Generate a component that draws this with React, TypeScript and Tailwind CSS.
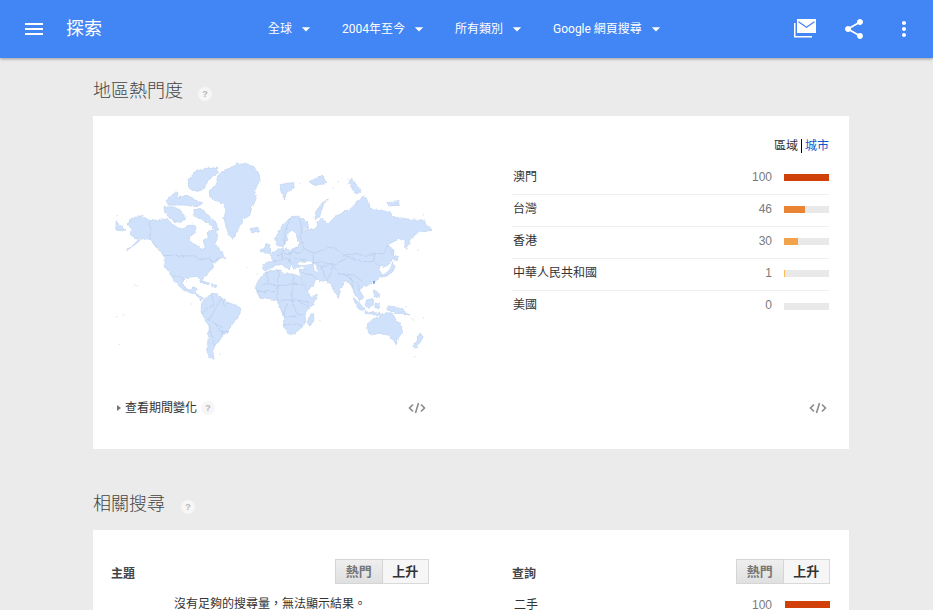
import { MdMenu, MdShare, MdMoreVert, MdArrowDropDown } from "react-icons/md";

const font = { fontFamily: '"Liberation Sans"' };

const filters = ["全球", "2004年至今", "所有類別", "Google 網頁搜尋"];

const regions = [
  { name: "澳門", value: 100, color: "bg-[#d0410a]" },
  { name: "台灣", value: 46, color: "bg-[#e88434]" },
  { name: "香港", value: 30, color: "bg-[#f2a24b]" },
  { name: "中華人民共和國", value: 1, color: "bg-[#fbbc52]" },
  { name: "美國", value: 0, color: "bg-[#fbbc52]" },
];

const land = [
  // north america
  "M84,222 L92,207 L115,197 L150,208 L175,212 L205,206 L215,222 L232,232 L250,238 L262,228 L280,222 L288,232 L285,245 L270,258 L268,272 L285,285 L300,292 L305,305 L315,290 L310,270 L325,265 L322,245 L340,240 L350,250 L354,262 L345,280 L355,295 L365,310 L378,323 L360,325 L350,335 L335,340 L338,352 L325,368 L310,385 L305,395 L300,385 L285,380 L265,382 L250,385 L250,400 L260,418 L275,420 L285,412 L292,418 L285,430 L300,438 L310,445 L305,452 L295,440 L275,430 L250,420 L235,405 L222,390 L212,375 L205,365 L192,345 L192,320 L180,300 L165,285 L150,268 L130,265 L110,280 L90,295 L80,300 L100,285 L120,265 L100,262 L88,250 L95,240 Z",
  // south america
  "M305,460 L320,440 L335,430 L355,432 L365,445 L385,458 L405,465 L422,475 L420,490 L408,510 L395,525 L385,545 L368,555 L360,570 L345,585 L338,605 L342,628 L328,622 L320,600 L325,565 L328,530 L315,510 L303,485 Z",
  // greenland
  "M328,125 L345,105 L355,75 L385,55 L415,42 L445,42 L465,55 L482,80 L475,100 L465,120 L468,140 L455,170 L450,195 L430,210 L418,228 L408,255 L398,268 L388,258 L380,235 L372,205 L378,180 L368,160 L345,150 L330,140 Z",
  // eurasia
  "M488,358 L490,340 L505,335 L520,336 L515,325 L510,312 L525,305 L535,298 L548,296 L552,302 L560,296 L575,305 L578,295 L590,292 L600,280 L595,265 L590,250 L575,240 L565,250 L560,270 L553,285 L545,290 L530,285 L525,268 L535,245 L550,222 L570,205 L590,198 L610,205 L625,220 L625,235 L600,240 L605,245 L640,235 L650,232 L655,215 L665,205 L685,222 L700,205 L720,190 L745,180 L760,170 L775,150 L790,138 L805,150 L810,175 L840,180 L870,186 L880,200 L910,205 L940,210 L972,210 L992,240 L975,245 L960,246 L940,258 L930,275 L920,298 L915,285 L915,270 L905,265 L880,275 L865,285 L880,305 L880,320 L870,340 L855,350 L840,345 L838,360 L845,372 L835,385 L825,395 L805,405 L790,410 L778,420 L790,440 L782,452 L770,438 L760,418 L748,398 L735,395 L722,420 L715,445 L705,430 L695,405 L680,395 L660,392 L648,385 L640,405 L620,425 L610,405 L600,370 L598,358 L620,358 L605,350 L590,352 L582,358 L575,345 L565,340 L570,358 L558,352 L548,342 L535,345 L522,345 L512,355 L500,362 Z",
  // africa
  "M468,405 L480,385 L495,368 L515,362 L540,360 L555,372 L580,372 L600,380 L612,405 L625,430 L635,440 L652,436 L640,460 L625,480 L615,495 L617,515 L600,535 L585,552 L565,553 L552,525 L550,500 L540,470 L535,452 L520,448 L500,445 L480,445 L470,425 Z",
  // australia, tasmania, new zealand, madagascar
  "M802,522 L815,510 L835,502 L848,490 L865,488 L880,495 L888,510 L905,530 L905,548 L895,565 L880,570 L862,555 L845,548 L815,555 L805,548 Z",
  "M882,572 L894,572 L888,584 Z",
  "M958,552 L970,560 L960,575 L945,595 L938,590 L950,575 Z",
  "M640,490 L642,510 L630,528 L622,518 L628,500 Z",
  // japan, sakhalin
  "M840,378 L860,370 L872,355 L878,335 L885,350 L878,365 L860,378 L845,382 Z",
  "M880,322 L895,318 L892,332 L882,330 Z",
  "M874,296 L882,300 L880,318 L874,312 Z",
  // uk, ireland, iceland
  "M490,305 L495,290 L500,278 L510,285 L512,305 L495,310 Z",
  "M482,295 L490,292 L490,305 L482,305 Z",
  "M450,236 L474,232 L476,246 L456,250 Z",
  // indonesia, philippines
  "M760,445 L775,455 L795,480 L788,482 L770,470 Z",
  "M795,485 L840,490 L840,495 L795,490 Z",
  "M800,450 L820,445 L820,460 L808,475 L795,468 Z",
  "M825,460 L838,458 L835,480 L825,472 Z",
  "M862,468 L885,470 L905,478 L928,495 L905,490 L885,490 L865,480 Z",
  "M820,420 L832,425 L838,445 L825,440 Z",
  // caribbean
  "M300,392 L330,400 L325,404 L300,397 Z",
  "M335,405 L350,405 L348,412 L335,411 Z",
  // arctic islands
  "M262,95 L285,65 L315,55 L350,55 L355,68 L335,80 L320,100 L310,120 L285,125 L268,115 Z",
  "M282,180 L300,175 L325,195 L345,215 L355,240 L345,242 L335,225 L315,215 L300,205 L285,200 Z",
  "M192,172 L220,170 L240,180 L255,200 L245,218 L225,215 L205,200 L195,190 Z",
  "M198,150 L215,135 L232,125 L235,145 L260,135 L285,150 L310,160 L290,170 L255,165 L225,165 L205,165 Z",
  "M538,105 L560,100 L582,98 L578,115 L560,130 L553,148 L545,130 Z",
  "M628,95 L650,85 L668,78 L680,100 L650,105 Z",
  "M745,100 L755,85 L770,105 L785,122 L770,132 Z",
  "M645,205 L648,185 L665,160 L690,145 L680,155 L665,175 L658,205 Z",
  "M860,158 L895,155 L898,165 L870,168 Z",
  "M48,215 L60,225 L78,240 L65,242 L48,240 Z",
];

const specks = [
  [105, 405], [112, 408], [50, 500], [70, 495], [58, 583], [440, 352], [472, 372], [478, 392], [635, 505], [660, 512],
  [935, 505], [970, 503], [945, 620], [905, 477], [918, 470], [52, 197], [715, 95], [745, 88], [970, 195], [955, 300],
  [360, 612], [275, 462], [940, 510], [600, 100], [700, 115],
];

const borders = [
  "M150,208 L150,268 L175,300",
  "M190,316 L285,318 L300,330 L325,325 L340,335 L360,322",
  "M212,378 L240,378 L258,395",
  "M335,432 L340,465 L305,490",
  "M365,445 L345,480 L325,510 L345,520 L360,545 L385,545",
  "M328,530 L345,590",
  "M345,520 L370,535 L365,555",
  "M365,445 L375,470 L385,458",
  "M600,260 L612,295 L640,310 L680,295 L700,290 L730,315 L775,310 L795,320 L825,310 L850,312 L865,285",
  "M640,310 L640,340 L665,335 L700,345 L730,330 L745,318",
  "M730,315 L745,322 L785,335 L820,335 L825,310",
  "M825,340 L838,345",
  "M650,345 L665,350 L680,395",
  "M665,350 L700,345 L690,375 L680,395",
  "M700,345 L715,370 L750,380 L760,400",
  "M715,370 L760,375 L790,395",
  "M605,370 L640,375 L650,385",
  "M750,380 L760,418",
  "M770,395 L780,420",
  "M570,205 L555,245 L553,285",
  "M600,205 L605,245 L600,260",
  "M600,280 L585,300 L575,305 L570,330 L575,345",
  "M530,315 L545,312 L575,310",
  "M520,336 L540,330 L560,325 L585,340",
  "M548,296 L545,330",
  "M575,305 L600,310 L612,295",
  "M585,325 L620,330",
  "M500,366 L505,400 L535,410 L580,400 L580,372",
  "M535,360 L535,410",
  "M480,410 L505,400",
  "M470,425 L520,425 L535,410",
  "M535,410 L530,450",
  "M580,400 L610,405",
  "M530,450 L590,450 L625,455",
  "M580,400 L575,450 L590,490 L610,495",
  "M560,460 L550,500 L590,500",
  "M552,525 L590,520 L610,530",
  "M590,450 L625,470",
];

function HelpIcon({ className }: { className?: string }) {
  return (
    <span className={`flex h-[14px] w-[14px] items-center justify-center rounded-full bg-[#f6f6f6] text-[9px] font-bold leading-none text-[#b5b5b5] ${className ?? ""}`} style={font}>
      ?
    </span>
  );
}

function CodeIcon() {
  return (
    <svg width="18" height="12" viewBox="0 0 18 12" fill="none" stroke="#8a8a8a" strokeWidth="1.6">
      <path d="M5,2.5 L1.5,6 L5,9.5 M13,2.5 L16.5,6 L13,9.5 M10.5,1 L7.5,11" />
    </svg>
  );
}

function ToggleButtons() {
  return (
    <div className="flex h-[25px] w-[94px] text-[13px] font-bold">
      <div className="flex flex-1 items-center justify-center border border-[#d5d5d5] bg-gradient-to-b from-[#eeeeee] to-[#e0e0e0] text-[#777777]">熱門</div>
      <div className="flex flex-1 items-center justify-center border border-l-0 border-[#d9d9d9] bg-[#f6f6f6] text-[#333333]">上升</div>
    </div>
  );
}

function WorldMap() {
  return (
    <svg width="340" height="220" viewBox="0 0 1020 660">
      <defs>
        <filter id="coast" x="-5%" y="-5%" width="110%" height="110%" colorInterpolationFilters="sRGB">
          <feTurbulence type="fractalNoise" baseFrequency="0.07" numOctaves="3" seed="4" />
          <feDisplacementMap in="SourceGraphic" scale="10" xChannelSelector="R" yChannelSelector="G" />
        </filter>
      </defs>
      <g filter="url(#coast)">
        <g fill="#d0e1fb" stroke="#c4d6f0" strokeWidth="2.5" strokeLinejoin="round">
          {land.map((d) => (
            <path key={d} d={d} />
          ))}
        </g>
        {/* seas drawn over the land */}
        <path d="M592,338 L630,332 L640,342 L612,347 L596,346 Z M640,340 L650,345 L652,368 L642,362 Z" fill="#ffffff" stroke="#c4d6f0" strokeWidth="2" />
        <g fill="none" stroke="#bccfea" strokeWidth="2.5">
          {borders.map((d) => (
            <path key={d} d={d} />
          ))}
        </g>
      </g>
      {specks.map(([x, y]) => (
        <circle key={`${x}-${y}`} cx={x} cy={y} r="2" fill="#d0e1fb" />
      ))}
      <path d="M820,393 L825,393 L823,403 L820,402 Z" fill="#5b8fe0" />
    </svg>
  );
}

export default function App() {
  return (
    <div className="flex h-[610px] w-[933px] flex-col overflow-hidden bg-[#ebebeb] text-[#333333]" style={{ fontFamily: '"Liberation Sans", "Noto Sans CJK TC", sans-serif' }}>
      <header className="relative z-10 flex h-[58px] shrink-0 items-center bg-[#4285f4] text-white shadow-[0_1px_3px_rgba(0,0,0,0.35)]">
        <MdMenu className="ml-[22px] h-6 w-6" />
        <div className="ml-[20px] w-[36px] pt-[1px] text-[18px]">探索</div>
        <nav className="ml-[166px] flex items-center text-[12px]">
          {filters.map((f) => (
            <div key={f} className="mr-[26px] flex items-center">
              <span style={{ fontFamily: 'Roboto, "Noto Sans CJK TC", sans-serif' }}>{f}</span>
              <MdArrowDropDown className="ml-[4px] h-5 w-5" />
            </div>
          ))}
        </nav>
        <div className="ml-auto flex items-center">
          <svg width="24" height="22" viewBox="0 0 24 22" fill="white">
            <path d="M4,1 H23 V15 H4 Z M5.5,3 L13.5,8.5 L21.5,3 L21.5,4.5 L13.5,10 L5.5,4.5 Z" fillRule="evenodd" />
            <path d="M1,5 H2.5 V18 H19 V19.5 H1 Z" />
          </svg>
          <MdShare className="ml-[25px] h-6 w-6" />
          <MdMoreVert className="ml-[26px] mr-[17px] h-6 w-6" />
        </div>
      </header>

      <main className="ml-[93px] w-[756px]">
        <div className="flex h-[58px] items-end pb-[14px]">
          <h2 className="text-[18px] leading-[22px] font-light text-[#444444]">地區熱門度</h2>
          <HelpIcon className="mb-[1px] ml-[15px]" />
        </div>

        <section className="flex h-[333px] flex-col bg-white">
          <div className="flex h-[254px]">
            <div className="ml-[7px] mt-[34px]">
              <WorldMap />
            </div>
            <div className="ml-[72px] w-[317px] pt-[22px]">
              <div className="flex h-[16px] items-center justify-end text-[12px] leading-none">
                <span>區域</span>
                <span className="mx-[3px] h-[14px] w-px bg-black" />
                <a className="text-[#1155cc]">城市</a>
              </div>
              <div className="mt-[9px]">
                {regions.map((r, i) => (
                  <div key={r.name} className={`flex h-[32px] items-center pb-[4px] text-[12px] ${i < regions.length - 1 ? "border-b border-[#eeeeee]" : ""}`}>
                    <span className="ml-[1px] flex-1">{r.name}</span>
                    <span className="text-[#7a7a7a]" style={font}>{r.value}</span>
                    <div className="ml-[12px] mt-[2px] h-[7px] w-[45px] bg-[#e9e9e9]">
                      <div className={`h-full ${r.color}`} style={{ width: `${r.value === 1 ? 2 : r.value}%` }} />
                    </div>
                  </div>
                ))}
              </div>
            </div>
          </div>
          <div className="mt-[30px] flex h-[16px] items-center text-[12px]">
            <span className="ml-[24px] h-0 w-0 border-y-[3px] border-l-[4px] border-y-transparent border-l-[#777777]" />
            <span className="ml-[4px]">查看期間變化</span>
            <HelpIcon className="ml-[4px]" />
            <div className="ml-[193px]"><CodeIcon /></div>
            <div className="ml-[383px]"><CodeIcon /></div>
          </div>
        </section>

        <div className="flex h-[81px] items-end pb-[15px]">
          <h2 className="text-[18px] leading-[22px] font-light text-[#444444]">相關搜尋</h2>
          <HelpIcon className="mb-[1px] ml-[16px]" />
        </div>

        <section className="grid h-[120px] grid-cols-[401px_318px] bg-white pl-[18px] pt-[29px] text-[12px]">
          <div className="w-[318px]">
            <div className="flex items-center justify-between">
              <span className="mt-[4px] font-bold text-[#444444]">主題</span>
              <ToggleButtons />
            </div>
            <p className="ml-[63px] mt-[11px] leading-[18px]">沒有足夠的搜尋量，無法顯示結果。</p>
          </div>
          <div>
            <div className="flex items-center justify-between">
              <span className="mt-[4px] font-bold text-[#444444]">查詢</span>
              <ToggleButtons />
            </div>
            <div className="mt-[12px] flex h-[18px] items-start">
              <span className="ml-[2px] flex-1">二手</span>
              <span className="text-[#7a7a7a]" style={font}>100</span>
              <div className="ml-[13px] mt-[5px] h-[7px] w-[45px] bg-[#d0410a]" />
            </div>
          </div>
        </section>
      </main>
    </div>
  );
}
